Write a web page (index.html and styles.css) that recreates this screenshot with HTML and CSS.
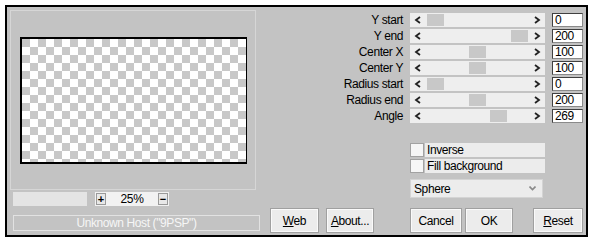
FILE: index.html
```html
<!DOCTYPE html>
<html lang="en">
<head>
    <meta charset="UTF-8">
    <link rel="stylesheet" href="styles.css">
    <title>Gradient filter</title>
</head>
<body>
    <div class="dialog">
        <div class="left">
            <div class="panel">
                <div class="preview"></div>
            </div>
            <div class="zoom-row">
                <div class="zoom-bar"></div>
                <div class="zoom-box">
                    <span class="zbtn">+</span>
                    <span class="zval">25%</span>
                    <span class="zbtn">&minus;</span>
                </div>
            </div>
            <div class="status">Unknown Host ("9PSP")</div>
        </div>

        <div class="right">
            <div class="sliders">
                <label>Y start</label>
                <div class="track"><svg class="arr" viewBox="0 0 17 14"><polyline points="10,4 6,7 10,10"/></svg><div class="rail"><b class="thumb" style="margin-left:0px"></b></div><svg class="arr" viewBox="0 0 17 14"><polyline points="7,4 11,7 7,10"/></svg></div>
                <div class="num">0</div>

                <label>Y end</label>
                <div class="track"><svg class="arr" viewBox="0 0 17 14"><polyline points="10,4 6,7 10,10"/></svg><div class="rail"><b class="thumb" style="margin-left:84px"></b></div><svg class="arr" viewBox="0 0 17 14"><polyline points="7,4 11,7 7,10"/></svg></div>
                <div class="num">200</div>

                <label>Center X</label>
                <div class="track"><svg class="arr" viewBox="0 0 17 14"><polyline points="10,4 6,7 10,10"/></svg><div class="rail"><b class="thumb" style="margin-left:42px"></b></div><svg class="arr" viewBox="0 0 17 14"><polyline points="7,4 11,7 7,10"/></svg></div>
                <div class="num">100</div>

                <label>Center Y</label>
                <div class="track"><svg class="arr" viewBox="0 0 17 14"><polyline points="10,4 6,7 10,10"/></svg><div class="rail"><b class="thumb" style="margin-left:42px"></b></div><svg class="arr" viewBox="0 0 17 14"><polyline points="7,4 11,7 7,10"/></svg></div>
                <div class="num">100</div>

                <label>Radius start</label>
                <div class="track"><svg class="arr" viewBox="0 0 17 14"><polyline points="10,4 6,7 10,10"/></svg><div class="rail"><b class="thumb" style="margin-left:0px"></b></div><svg class="arr" viewBox="0 0 17 14"><polyline points="7,4 11,7 7,10"/></svg></div>
                <div class="num">0</div>

                <label>Radius end</label>
                <div class="track"><svg class="arr" viewBox="0 0 17 14"><polyline points="10,4 6,7 10,10"/></svg><div class="rail"><b class="thumb" style="margin-left:42px"></b></div><svg class="arr" viewBox="0 0 17 14"><polyline points="7,4 11,7 7,10"/></svg></div>
                <div class="num">200</div>

                <label>Angle</label>
                <div class="track"><svg class="arr" viewBox="0 0 17 14"><polyline points="10,4 6,7 10,10"/></svg><div class="rail"><b class="thumb" style="margin-left:63px"></b></div><svg class="arr" viewBox="0 0 17 14"><polyline points="7,4 11,7 7,10"/></svg></div>
                <div class="num">269</div>
            </div>

            <div class="checks">
                <div class="check"><span class="box"></span><span class="txt">Inverse</span></div>
                <div class="check"><span class="box"></span><span class="txt">Fill background</span></div>
            </div>

            <div class="select">
                <span>Sphere</span>
                <svg width="7" height="5" viewBox="0 0 7 5"><polyline points="0.5,0.5 3.5,3.5 6.5,0.5" fill="none" stroke="#8a8a8a" stroke-width="1.6"/></svg>
            </div>

            <div class="buttons">
                <button class="btn b-web"><u>W</u>eb</button>
                <button class="btn b-about"><u>A</u>bout...</button>
                <button class="btn b-cancel">Cancel</button>
                <button class="btn b-ok">OK</button>
                <button class="btn b-reset"><u>R</u>eset</button>
            </div>
        </div>
    </div>
</body>
</html>
```

FILE: styles.css
```css
* {
    margin: 0;
    padding: 0;
    box-sizing: border-box;
}
body {
    background: #fff;
    font-family: "Liberation Sans", Arial, sans-serif;
    font-size: 11px;
    letter-spacing: -0.4px;
    color: #000;
}
.dialog {
    margin: 5px;
    width: 583px;
    height: 232px;
    border: 2px solid #000;
    background: #c3c3c3;
    display: flex;
    padding: 0 3px;
}

/* left side */
.left {
    width: 250px;
    display: flex;
    flex-direction: column;
    padding-top: 3px;
}
.panel {
    width: 246px;
    height: 180px;
    border: 1px solid #d6d6d6;
    padding: 26px 0 0 9px;
}
.preview {
    width: 227px;
    height: 127px;
    border-top: 2px solid #000;
    border-left: 2px solid #000;
    border-right: 1px solid #000;
    border-bottom: 2px solid #000;
    background-color: #fff;
    background-image: conic-gradient(#c8c8c8 25%, #fff 0 50%, #c8c8c8 0 75%, #fff 0);
    background-size: 16px 16px;
    background-position: 8px 0;
}
.zoom-row {
    display: flex;
    height: 14px;
    margin: 2px 0 0 3px;
}
.zoom-bar {
    width: 74px;
    background: #e4e4e4;
}
.zoom-box {
    width: 74px;
    margin-left: 8px;
    background: #f2f2f2;
    display: flex;
    align-items: center;
    justify-content: space-between;
    padding: 0 1px;
}
.zbtn {
    width: 10px;
    height: 12px;
    border: 1px solid #9a9a9a;
    background: #e8e8e8;
    font-size: 11px;
    font-weight: bold;
    line-height: 10px;
    text-align: center;
    letter-spacing: 0;
}
.zval {
    font-size: 12px;
    line-height: 14px;
}
.status {
    width: 247px;
    height: 16px;
    margin: 9px 0 0 3px;
    border: 1px solid #e2e2e2;
    color: #f6f6f6;
    font-size: 12px;
    line-height: 14px;
    text-align: center;
}

/* right side */
.right {
    width: 313px;
    margin-left: 10px;
    padding-top: 6px;
    display: flex;
    flex-direction: column;
}
.sliders {
    display: grid;
    grid-template-columns: 133px 135px 31px;
    grid-auto-rows: 14px;
    column-gap: 7px;
    row-gap: 2px;
}
.sliders label {
    text-align: right;
    font-size: 12px;
    line-height: 14px;
}
.track {
    display: flex;
    align-items: center;
    background: #eeeeee;
}
.arr {
    width: 17px;
    height: 14px;
    flex: none;
}
.arr polyline {
    fill: none;
    stroke: #222;
    stroke-width: 1.8;
}
.rail {
    flex: 1;
    display: flex;
    align-items: center;
}
.thumb {
    width: 17px;
    height: 12px;
    background: #c8c8c8;
}
.num {
    background: #fff;
    border: 1px solid #404040;
    border-right-color: #8a8a8a;
    border-bottom-color: #8a8a8a;
    font-size: 12px;
    line-height: 12px;
    padding-left: 2px;
}

.checks {
    margin: 20px 0 0 140px;
    width: 135px;
    display: flex;
    flex-direction: column;
    gap: 2px;
}
.check {
    display: flex;
    height: 14px;
}
.box {
    width: 14px;
    height: 14px;
    border: 1px solid #a2a2a2;
    background: #f6f6f6;
}
.txt {
    flex: 1;
    margin-left: 1px;
    padding-left: 2px;
    background: #ececec;
    font-size: 12px;
    line-height: 14px;
}
.select {
    margin: 6px 0 0 140px;
    width: 133px;
    height: 19px;
    border: 1px solid #d4d4d4;
    background: #ececec;
    display: flex;
    align-items: center;
    justify-content: space-between;
    padding: 0 6px 0 3px;
    font-size: 12px;
}

.buttons {
    display: flex;
    margin-top: 10px;
    height: 25px;
}
.btn {
    height: 25px;
    border: 1px solid #a0a0a0;
    box-shadow: inset 0 0 0 1px #fafafa;
    background: #ececec;
    font-family: "Liberation Sans", Arial, sans-serif;
    font-size: 12px;
    letter-spacing: -0.4px;
    color: #000;
}
.b-web { width: 49px; }
.b-about { width: 48px; margin-left: 7px; }
.b-cancel { width: 52px; margin-left: 36px; }
.b-ok { width: 48px; margin-left: 3px; }
.b-reset { width: 50px; margin-left: 20px; }
```
